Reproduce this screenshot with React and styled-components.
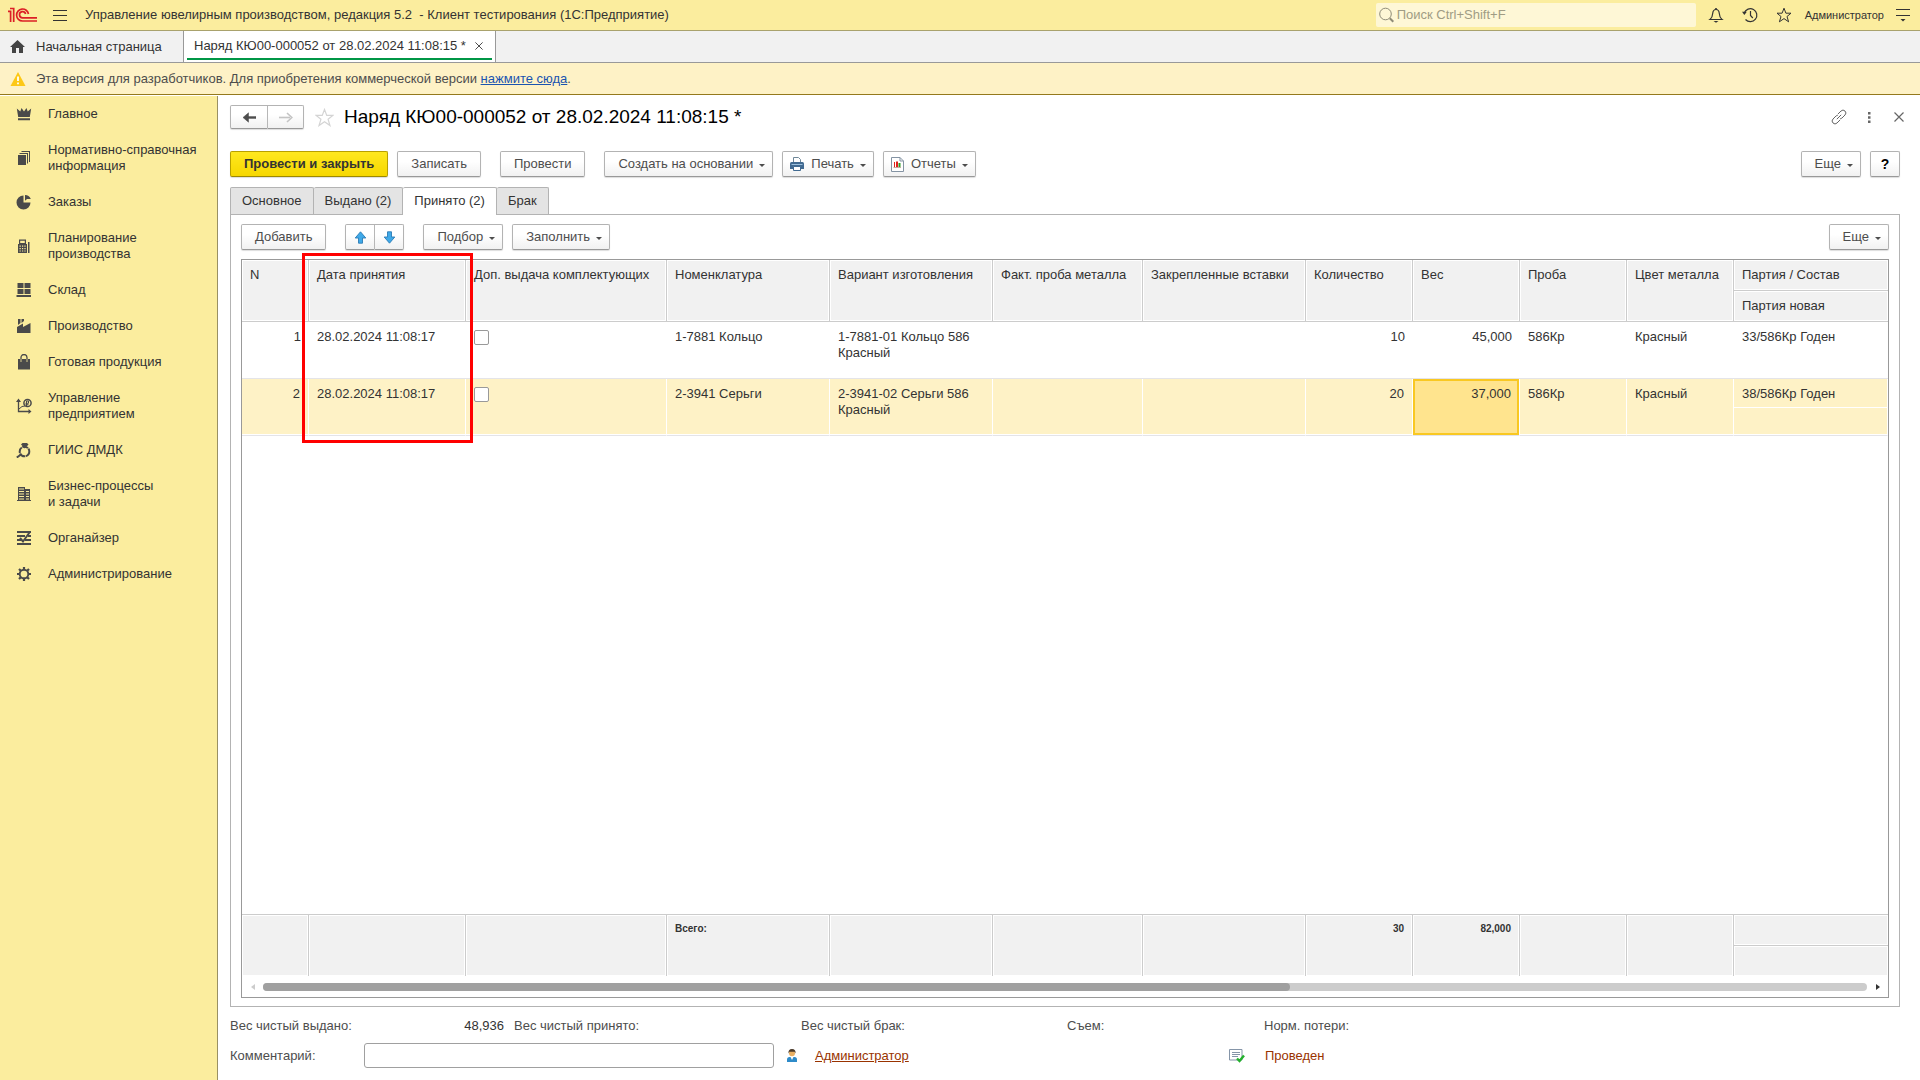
import React, { useState } from "react";
import styled, { createGlobalStyle, css } from "styled-components";

const GlobalStyle = createGlobalStyle`
  * {
    box-sizing: border-box;
  }

  body {
    margin: 0;
    background: #fff;
    color: #333;
    font-family: "Liberation Sans", Arial, sans-serif;
    font-size: 13px;
    line-height: 16px;
  }

  button,
  input {
    font: inherit;
    color: inherit;
  }

  svg {
    display: block;
    flex: none;
  }
`;

const Page = styled.div`
  display: flex;
  flex-direction: column;
  min-height: 100vh;
`;

/* ---------- top bar ---------- */

const TopBar = styled.header`
  display: flex;
  align-items: center;
  height: 31px;
  padding: 0 2px 0 8px;
  background: #fbed9e;
  border-bottom: 1px solid #a9a26d;
  white-space: nowrap;
  overflow: hidden;
`;

const PlainButton = styled.button`
  display: flex;
  align-items: center;
  justify-content: center;
  width: ${(p) => p.$width || 30}px;
  height: 24px;
  padding: 0;
  border: 0;
  background: none;
  flex: none;
`;

const AppTitle = styled.div`
  flex: 1;
  margin-left: 3px;
  white-space: pre;
`;

const Search = styled.label`
  display: flex;
  align-items: center;
  gap: 3px;
  width: 320px;
  height: 24px;
  margin-right: 3px;
  padding-left: 3px;
  border-radius: 2px;
  background: #fef7d6;
  color: #8f8c78;
`;

const SearchInput = styled.input`
  flex: 1;
  min-width: 0;
  padding: 0;
  border: 0;
  outline: 0;
  background: none;

  &::placeholder {
    color: #a09c84;
    opacity: 1;
  }
`;

const UserName = styled.button`
  padding: 0 4px;
  border: 0;
  background: none;
  font-size: 11px;
`;

/* ---------- window tabs ---------- */

const WindowTabs = styled.div`
  display: flex;
  height: 32px;
  background: #f1f1f1;
  border-bottom: 1px solid #999;
`;

const HomeTab = styled.button`
  display: flex;
  align-items: center;
  gap: 11px;
  width: 183px;
  padding: 0 0 0 10px;
  border: 0;
  background: none;
`;

const WindowTab = styled.div`
  padding: 0 3px 2px;
  border: solid #999;
  border-width: 0 1px;
  background: #fff;
`;

const WindowTabBody = styled.div`
  display: flex;
  align-items: center;
  height: 100%;
  padding: 2px 0 0 7px;
  border-bottom: 2px solid #009646;
`;

const Warning = styled.div`
  display: flex;
  align-items: center;
  gap: 10px;
  height: 32px;
  padding: 0 10px;
  background: #fef2c6;
  border-bottom: 1px solid #94791c;
  color: #4d4d4d;

  a {
    color: #1a54b0;
  }
`;

/* ---------- sections panel ---------- */

const Body = styled.div`
  display: flex;
  flex: 1;
`;

const Sections = styled.nav`
  width: 218px;
  flex: none;
  margin-top: 1px;
  background: #fbed9e;
  border-right: 1px solid #999063;
`;

const SectionLink = styled.a`
  display: flex;
  align-items: center;
  gap: 16px;
  padding: 10px 8px 10px 16px;
  color: #333;
  text-decoration: none;
  white-space: pre-line;

  svg {
    fill: #4a4a4a;
  }
`;

/* ---------- form ---------- */

const Form = styled.main`
  display: flex;
  flex-direction: column;
  flex: 1;
  min-width: 0;
  padding: 10px 20px 12px 12px;
`;

const TitleRow = styled.div`
  display: flex;
  align-items: center;
  height: 24px;
  margin: 0 -14px 22px 0;
`;

const Title = styled.h1`
  flex: 1;
  margin: 0;
  color: #000;
  font-size: 19px;
  font-weight: 400;
  line-height: 22px;
`;

const buttonFace = css`
  border: 1px solid #b3b3b3;
  border-bottom-color: #999;
  background: linear-gradient(#fff 40%, #f1f1f1);
  box-shadow: 0 1px 1px #ddd;
  color: #4d4d4d;
`;

const Button = styled.button`
  ${buttonFace}
  display: flex;
  align-items: center;
  justify-content: center;
  height: 26px;
  padding: 0 ${(p) => (p.$menu ? 7 : 13)}px 0 ${(p) => (p.$icon ? 7 : 13)}px;
  border-radius: 2px;
  white-space: nowrap;

  ${(p) =>
    p.$primary &&
    css`
      border-color: #b8a000;
      border-bottom-color: #9d8900;
      background: linear-gradient(#ffe81f, #f6d700);
      color: #333;
      font-weight: 700;
    `}

  svg:first-child {
    margin-right: 7px;
  }
`;

const HelpButton = styled(Button)`
  width: 30px;
  padding: 0;
  color: #000;
  font-size: 14px;
  font-weight: 700;
`;

const Caret = styled.span`
  margin: 3px 0 0 6px;
  border: 3px solid transparent;
  border-top-color: #4d4d4d;
  border-bottom: 0;
`;

const ButtonPair = styled.div`
  display: flex;
`;

const PairButton = styled.button`
  ${buttonFace}
  display: flex;
  align-items: center;
  justify-content: center;
  width: ${(p) => p.$width}px;
  height: ${(p) => p.$height}px;
  padding: 0;
  border-radius: 2px 0 0 2px;

  & + & {
    border-left: 0;
    border-radius: 0 2px 2px 0;
  }
`;

const Toolbar = styled.div`
  display: flex;
  align-items: center;
  gap: 19px;
`;

const ToolGroup = styled.div`
  display: flex;
  gap: 9px;
  margin-left: ${(p) => (p.$end ? "auto" : "0")};
`;

const PageTabs = styled.div`
  display: flex;
  height: 27px;
  margin-top: 10px;
`;

const PageTab = styled.button`
  position: relative;
  height: ${(p) => (p.$active ? 28 : 27)}px;
  padding: 0 11px 1px;
  border: 1px solid #b3b3b3;
  border-bottom-width: 0;
  border-radius: 2px 2px 0 0;
  background: ${(p) => (p.$active ? "#fff" : "#e4e4e4")};

  & + & {
    border-left-width: ${(p) => (p.$active ? "0" : "1px")};
  }
`;

const TabPanel = styled.div`
  display: flex;
  flex-direction: column;
  flex: 1;
  gap: 9px;
  padding: 9px 10px 8px;
  border: 1px solid #b3b3b3;
`;

/* ---------- grid ---------- */

const Grid = styled.div`
  position: relative;
  display: flex;
  flex-direction: column;
  flex: 1;
  border: 1px solid #999;
`;

const Table = styled.table`
  flex: 1;
  width: 100%;
  table-layout: fixed;
  border-collapse: separate;
  border-spacing: 0;
`;

const Head = styled.th`
  height: 31px;
  padding: 7px 0 0 8px;
  border: solid #ccc;
  border-width: 0 ${(p) => (p.$last ? 0 : 1)}px 1px 0;
  background: #f1f1f1;
  box-shadow: inset 0 0 0 1px #fff;
  font-weight: 400;
  text-align: left;
  vertical-align: top;
  white-space: nowrap;
`;

const Cell = styled.td`
  height: ${(p) => (p.$half ? 28 : 57)}px;
  padding: 7px 8px 0;
  border-bottom: 1px solid #e4e4e8;
  text-align: ${(p) => (p.$right ? "right" : "left")};
  vertical-align: top;

  ${(p) =>
    p.$selected &&
    css`
      border-right: 1px solid #fff;
      background: #fef2c6;
      box-shadow: inset 0 -1px 0 #fff;
    `}

  ${(p) =>
    p.$current &&
    css`
      background: #ffe48e;
      box-shadow: inset 0 0 0 2px #f9c822;
    `}
`;

const TopHalf = styled(Cell)`
  height: 29px;
  border-bottom-color: #fff;
  box-shadow: none;
`;

const Filler = styled.tr`
  height: 100%;
`;

const Total = styled.td`
  height: ${(p) => p.$height}px;
  padding: 6px 8px 0;
  border: solid #ccc;
  border-width: ${(p) => (p.$lower ? 0 : 1)}px ${(p) => (p.$last ? 0 : 1)}px
    ${(p) => (p.$upper ? 1 : 0)}px 0;
  background: #f1f1f1;
  box-shadow: inset 0 0 0 1px #fff;
  font-size: 10px;
  font-weight: 700;
  text-align: ${(p) => (p.$right ? "right" : "left")};
  vertical-align: top;
`;

const Checkbox = styled.input`
  display: block;
  appearance: none;
  width: 15px;
  height: 15px;
  margin: 1px 0 0;
  border: 1px solid #999;
  border-radius: 2px;
  background: #fff;
`;

const ScrollBar = styled.div`
  display: flex;
  align-items: center;
  justify-content: space-between;
  height: 21px;
  padding: 0 8px 0 9px;
`;

const Track = styled.div`
  flex: 1;
  height: 8px;
  margin: 0 9px 0 8px;
  border-radius: 4px;
  background: #ccc;
`;

const Thumb = styled.div`
  width: 64%;
  height: 8px;
  border-radius: 4px;
  background: #a0a0a0;
`;

const ScrollArrow = styled.span`
  border: 3px solid transparent;
  ${(p) =>
    p.$left
      ? "border-right: 4px solid #ccc; border-left: 0;"
      : "border-left: 4px solid #333; border-right: 0;"}
`;

const Highlight = styled.div`
  position: absolute;
  top: -7px;
  left: 60px;
  width: 171px;
  height: 190px;
  border: 3px solid #f00;
  pointer-events: none;
`;

/* ---------- form footer ---------- */

const Summary = styled.div`
  display: grid;
  grid-template-columns: 134px 140px 287px 266px 197px 1fr;
  align-items: center;
  margin-top: 11px;
  color: #4d4d4d;
`;

const SummaryValue = styled.output`
  justify-self: end;
  color: #333;
`;

const SummaryLabel = styled.span`
  padding-left: ${(p) => (p.$indent ? 10 : 0)}px;
`;

const CommentRow = styled.div`
  display: grid;
  grid-template-columns: 134px 410px 41px 414px 36px 1fr;
  align-items: center;
  margin-top: 9px;
  color: #4d4d4d;
`;

const CommentInput = styled.input`
  width: 100%;
  height: 25px;
  padding: 0 6px;
  border: 1px solid #a0a0a0;
  border-radius: 3px;
`;

const IconSlot = styled.span`
  padding-left: ${(p) => p.$pad || 0}px;
`;

const Author = styled.a`
  color: #993300;
`;

const Status = styled.span`
  color: #993300;
`;

/* ---------- icons ---------- */

const Logo = () => (
  <svg width="30" height="16" viewBox="0 0 30 16" fill="none" stroke="#dc1f26">
    <path d="M0 4.300H2.600V15M2 1.500H5.700V15" strokeWidth="1.700" />
    <path d="M20.500 7A6 6 0 1 0 14.500 14H29" strokeWidth="1.700" />
    <path d="M17.600 7A3.100 3.100 0 1 0 14.500 10.800H29" strokeWidth="1.700" />
  </svg>
);

const MenuIcon = () => (
  <svg width="14" height="11" viewBox="0 0 14 11" stroke="#333">
    <path d="M0 .5H14M0 5.5H14M0 10.5H14" />
  </svg>
);

const SearchIcon = () => (
  <svg width="15" height="16" viewBox="0 0 15 16" fill="none" stroke="#8f8c78">
    <circle cx="6.5" cy="7" r="5.8" />
    <path d="M10.8 11.2L14.3 14.8" strokeWidth="2" />
  </svg>
);

const BellIcon = () => (
  <svg width="16" height="16" viewBox="0 0 16 16" fill="none" stroke="#333">
    <path d="M2 12.5C4 11 4.5 9.500 4.700 6.500C4.900 4 6 2.500 8 2.500S11.100 4 11.300 6.500C11.500 9.500 12 11 14 12.500Z" strokeWidth="1.200" />
    <path d="M8 1V2.500" strokeWidth="1.600" />
    <path d="M5.500 14H10.500L8 15.800Z" fill="#333" stroke="none" />
  </svg>
);

const HistoryIcon = () => (
  <svg width="16" height="16" viewBox="0 0 16 16" fill="none" stroke="#333">
    <path d="M2.200 6A6.500 6.500 0 1 1 3.500 12.500" strokeWidth="1.200" />
    <path d="M8.500 4V8.500L10.800 11" strokeWidth="1.200" />
    <path d="M0 4.800H4.800L2.400 8Z" fill="#333" stroke="none" />
  </svg>
);

const StarIcon = ({ color = "#333", size = 16 }) => (
  <svg width={size} height={size} viewBox="0 0 16 16" fill="none" stroke={color}>
    <path d="M8 1.200L9.900 6.200H15L11 9.500L12.600 14.800L8 11.600L3.400 14.800L5 9.500L1 6.200H6.100Z" />
  </svg>
);

const OptionsIcon = () => (
  <svg width="14" height="14" viewBox="0 0 14 14">
    <path d="M0 1.500H14M0 7.500H14" stroke="#333" />
    <path d="M4.500 11H9.500L7 13.600Z" fill="#333" />
  </svg>
);

const HomeIcon = () => (
  <svg width="15" height="13" viewBox="0 0 15 13" fill="#444">
    <path d="M7.500 0L15 7H13V13H9V8H6V13H2V7H0Z" />
  </svg>
);

const CloseIcon = ({ size = 8, color = "#444" }) => (
  <svg width={size} height={size} viewBox="0 0 10 10" stroke={color} strokeWidth="1.200">
    <path d="M.5 .5L9.500 9.500M9.500 .5L.5 9.500" />
  </svg>
);

const WarningIcon = () => (
  <svg width="16" height="14" viewBox="0 0 16 14">
    <path d="M8 0L15.500 14H.5Z" fill="#fdc816" />
    <path d="M8 4.500V9M8 10.500V12.300" stroke="#fff" strokeWidth="1.800" />
  </svg>
);

const ArrowIcon = ({ back }) => (
  <svg width="15" height="11" viewBox="0 0 15 11" stroke={back ? "#4d4d4d" : "#c4c4c4"} fill={back ? "#4d4d4d" : "#c4c4c4"}>
    {back ? (
      <>
        <path d="M4 5.500H14" strokeWidth="2.400" />
        <path d="M6.500 .8V10.200L1 5.500Z" strokeWidth=".5" />
      </>
    ) : (
      <>
        <path d="M1 5.500H12" strokeWidth="1.600" />
        <path d="M9 1L13.800 5.500L9 10" strokeWidth="1.600" fill="none" />
      </>
    )}
  </svg>
);

const LinkIcon = () => (
  <svg width="16" height="16" viewBox="0 0 16 16" fill="none" stroke="#666">
    <path d="M6.800 5.200L10 2A2.800 2.800 0 0 1 14 6L10.800 9.200L9.300 9.600" />
    <path d="M9.200 10.800L6 14A2.800 2.800 0 0 1 2 10L5.200 6.800L6.700 6.400" />
    <path d="M5.800 10.200L10.200 5.800" />
  </svg>
);

const DotsIcon = () => (
  <svg width="3" height="11" viewBox="0 0 3 11" fill="#666">
    <path d="M0 0H2.500V2.500H0ZM0 4.200H2.500V6.700H0ZM0 8.500H2.500V11H0Z" />
  </svg>
);

const MoveIcon = ({ down }) => (
  <svg width="13" height="13" viewBox="0 0 13 13" fill="#3fa9e8" stroke="#2b7cb5">
    <path
      d={
        down
          ? "M4.500 .8H8.500V6H11.800L6.500 12.200L1.200 6H4.500Z"
          : "M6.500 .8L11.800 7H8.500V12.200H4.500V7H1.200Z"
      }
      strokeWidth=".9"
    />
  </svg>
);

const PrintIcon = () => (
  <svg width="14" height="14" viewBox="0 0 14 14">
    <path d="M3.500 5V.5H8.500L10.500 2.500V5" fill="#fff" stroke="#6f8798" />
    <path d="M0 6.500Q0 5 1.500 5H12.500Q14 5 14 6.500V12H0Z" fill="#416a91" />
    <path d="M1.500 7.500H12.500" stroke="#9cc0de" />
    <path d="M3.500 9.500H10.500V13.500H3.500Z" fill="#fff" stroke="#416a91" />
  </svg>
);

const ReportIcon = () => (
  <svg width="13" height="15" viewBox="0 0 13 15">
    <path d="M.5 .5H9L12.500 4V14.500H.5Z" fill="#fff" stroke="#8493a3" />
    <path d="M9 .5V4H12.500" fill="none" stroke="#8493a3" />
    <path d="M3 5H4V10H3ZM5 4.500H7V10H5Z" fill="#e0221c" />
    <path d="M7.500 6H9.500V10H7.500Z" fill="#2f9d27" />
    <path d="M2.500 10.500H10" stroke="#c9a79f" />
  </svg>
);

const UserIcon = () => (
  <svg width="10" height="13" viewBox="0 0 10 13">
    <path d="M0 13V10.500Q0 8 2.500 8H7.500Q10 8 10 10.500V13Z" fill="#2e8bc9" />
    <path d="M3.500 8L5 11L6.500 8Z" fill="#fff" />
    <circle cx="5" cy="4.200" r="3" fill="#e9b064" />
    <path d="M1.500 4.500Q1 0 5 0T8.500 4.500L7.500 2.800H2.500Z" fill="#4b3a2a" />
  </svg>
);

const PostedIcon = () => (
  <svg width="16" height="14" viewBox="0 0 16 14">
    <path d="M.5 .5H13V11H.5Z" fill="#fff" stroke="#8595a8" />
    <path d="M3 3.500H11M3 5.500H11M3 7.500H9" stroke="#8595a8" />
    <path d="M8 9.500L10.500 12L15 6.500" fill="none" stroke="#23b02c" strokeWidth="2.400" />
  </svg>
);

const sectionIcons = {
  crown: <path d="M.8 2.500L4.300 5.500L5.500 2L8 5.500L10.500 2L11.700 5.500L15.200 2.500L13.800 11H2.200ZM2 12.200H14V14.200H2Z" />,
  books: <path d="M2 5H10V15H2ZM3.500 3H12V13.500H11V4H3.500ZM5.500 1H14V12H13V2H5.500Z" />,
  pie: <path d="M7.500 1.500V8.500H14.500A7 7 0 1 1 7.500 1.500ZM9 1A6.500 6.500 0 0 1 14.800 5H11L9 6.800Z" />,
  register: (
    <path
      fillRule="evenodd"
      d="M3 1.500H10V6H11V15H2V6H3ZM4.200 2.700V5H8.800V2.700ZM3.500 7.500V8.800H4.800V7.500ZM6 7.500V8.800H7.200V7.500ZM8.400 7.500V8.800H9.600V7.500ZM3.500 10V11.200H4.800V10ZM6 10V11.200H7.200V10ZM8.400 10V11.200H9.600V10ZM3.500 12.400V13.600H4.800V12.400ZM6 12.400V13.600H7.200V12.400ZM8.400 12.400V13.600H9.600V12.400ZM12 4H13.500V15H12Z"
    />
  ),
  store: <path d="M1.500 1H7.500V6H1.500ZM8.500 1H14.500V6H8.500ZM1.500 7H7.500V12H1.500ZM8.500 7H14.500V12H8.500ZM.5 13H15V15H.5Z" />,
  factory: <path d="M2 1H4.500V5L2 7ZM5.500 1H8V3L5.500 5ZM1 9L7 5.500V9L14.500 5V15H1Z" />,
  bag: (
    <>
      <path d="M2 5H14V15.500H2Z" />
      <path d="M5 7V3.500A3 3 0 0 1 11 3.500V7" fill="none" stroke="#4a4a4a" strokeWidth="1.300" />
      <path d="M5 5V8M11 5V8" stroke="#fbed9e" strokeWidth=".8" />
    </>
  ),
  chart: (
    <>
      <path d="M2.500 2V13.500H14" fill="none" stroke="#4a4a4a" strokeWidth="1.300" />
      <path d="M0 4L2.500 .5L5 4ZM12.500 11L15.500 13.500L12.500 16Z" />
      <path d="M3 11L6 8.500L9 8" fill="none" stroke="#4a4a4a" />
      <circle cx="11.500" cy="5" r="3.600" fill="none" stroke="#4a4a4a" strokeWidth="1.500" />
      <path d="M10.500 8V3H12.500V5.300H9.500M9.500 6.700H12.500" fill="none" stroke="#4a4a4a" />
    </>
  ),
  ring: (
    <>
      <circle cx="8.500" cy="9.500" r="4.800" fill="none" stroke="#4a4a4a" strokeWidth="2" strokeDasharray="6 .6" />
      <path d="M5 2.500L6.500 1H11L12.500 2.500L8.800 6.500Z" />
      <path d="M.8 15.500L5 12.500" stroke="#4a4a4a" strokeWidth="2" />
    </>
  ),
  building: (
    <path
      fillRule="evenodd"
      d="M2 1H9V3H14V14H15V15H1V14H2ZM3 2.500V3.500H8V2.500ZM3 5V6H8V5ZM3 7.500V8.500H8V7.500ZM3 10V11H8V10ZM3 12.500V13.500H8V12.500ZM10 5V6H13V5ZM10 7.500V8.500H13V7.500ZM10 10V11H13V10ZM10 12.500V13.500H13V12.500Z"
    />
  ),
  organizer: (
    <>
      <path d="M1 1H15V3H1ZM1 5H9V7H1ZM12 5H15V7H12ZM1 9H5V11H1ZM9 9H15V11H9ZM1 13H15V15H1Z" />
      <path d="M4 8L7 11.500L13.500 2.500" fill="none" stroke="#4a4a4a" strokeWidth="2" />
    </>
  ),
  gear: (
    <>
      <circle cx="8" cy="8" r="4.300" fill="none" stroke="#4a4a4a" strokeWidth="1.900" />
      <path
        d="M8 1V3.500M8 12.500V15M1 8H3.500M12.500 8H15M3 3L4.800 4.800M11.200 11.200L13 13M13 3L11.200 4.800M4.800 11.200L3 13"
        stroke="#4a4a4a"
        strokeWidth="2.200"
      />
    </>
  ),
};

/* ---------- data ---------- */

const sections = [
  { icon: "crown", label: "Главное" },
  { icon: "books", label: "Нормативно-справочная\nинформация" },
  { icon: "pie", label: "Заказы" },
  { icon: "register", label: "Планирование\nпроизводства" },
  { icon: "store", label: "Склад" },
  { icon: "factory", label: "Производство" },
  { icon: "bag", label: "Готовая продукция" },
  { icon: "chart", label: "Управление\nпредприятием" },
  { icon: "ring", label: "ГИИС ДМДК" },
  { icon: "building", label: "Бизнес-процессы\nи задачи" },
  { icon: "organizer", label: "Органайзер" },
  { icon: "gear", label: "Администрирование" },
];

const tabs = ["Основное", "Выдано (2)", "Принято (2)", "Брак"];

const columns = [
  { key: "n", title: "N", width: 67, right: true },
  { key: "date", title: "Дата принятия", width: 157 },
  { key: "extra", title: "Доп. выдача комплектующих", width: 201 },
  { key: "item", title: "Номенклатура", width: 163, total: "Всего:" },
  { key: "variant", title: "Вариант изготовления", width: 163 },
  { key: "probe", title: "Факт. проба металла", width: 150 },
  { key: "inserts", title: "Закрепленные вставки", width: 163 },
  { key: "qty", title: "Количество", width: 107, right: true, total: "30" },
  { key: "weight", title: "Вес", width: 107, right: true, total: "82,000" },
  { key: "fineness", title: "Проба", width: 107 },
  { key: "color", title: "Цвет металла", width: 107 },
];

const rows = [
  {
    n: 1,
    date: "28.02.2024 11:08:17",
    item: "1-7881 Кольцо",
    variant: "1-7881-01 Кольцо 586 Красный",
    qty: 10,
    weight: "45,000",
    fineness: "586Кр",
    color: "Красный",
    batch: "33/586Кр Годен",
  },
  {
    n: 2,
    date: "28.02.2024 11:08:17",
    item: "2-3941 Серьги",
    variant: "2-3941-02 Серьги 586 Красный",
    qty: 20,
    weight: "37,000",
    fineness: "586Кр",
    color: "Красный",
    batch: "38/586Кр Годен",
  },
];

const MenuButton = ({ icon, children }) => (
  <Button type="button" $menu $icon={!!icon}>
    {icon}
    {children}
    <Caret />
  </Button>
);

const ItemsGrid = () => {
  const [selected, setSelected] = useState(2);

  return (
    <Grid>
      <Table>
        <colgroup>
          {columns.map((c) => (
            <col key={c.key} width={c.width} />
          ))}
          <col />
        </colgroup>
        <thead>
          <tr>
            {columns.map((c) => (
              <Head key={c.key} rowSpan={2}>
                {c.title}
              </Head>
            ))}
            <Head $last>Партия / Состав</Head>
          </tr>
          <tr>
            <Head $last>Партия новая</Head>
          </tr>
        </thead>
        <tbody>
          {rows.map((row) => {
            const active = row.n === selected;
            return (
              <React.Fragment key={row.n}>
                <tr onClick={() => setSelected(row.n)}>
                  {columns.map((c) => (
                    <Cell
                      key={c.key}
                      rowSpan={2}
                      $right={c.right}
                      $selected={active}
                      $current={active && c.key === "weight"}
                    >
                      {c.key === "extra" ? (
                        <Checkbox type="checkbox" aria-label={c.title} />
                      ) : (
                        row[c.key]
                      )}
                    </Cell>
                  ))}
                  <TopHalf $selected={active}>{row.batch}</TopHalf>
                </tr>
                <tr>
                  <Cell $half $selected={active} />
                </tr>
              </React.Fragment>
            );
          })}
          <Filler>
            <td colSpan={12} />
          </Filler>
        </tbody>
        <tfoot>
          <tr>
            {columns.map((c) => (
              <Total key={c.key} rowSpan={2} $height={62} $right={c.right}>
                {c.total}
              </Total>
            ))}
            <Total $height={32} $last $upper />
          </tr>
          <tr>
            <Total $height={30} $last $lower />
          </tr>
        </tfoot>
      </Table>
      <ScrollBar>
        <ScrollArrow $left />
        <Track>
          <Thumb />
        </Track>
        <ScrollArrow />
      </ScrollBar>
      <Highlight />
    </Grid>
  );
};

const App = () => {
  const [tab, setTab] = useState(2);

  return (
    <Page>
      <GlobalStyle />
      <TopBar>
        <Logo />
        <PlainButton type="button" aria-label="Меню" $width={44}>
          <MenuIcon />
        </PlainButton>
        <AppTitle>
          {"Управление ювелирным производством, редакция 5.2  - Клиент тестирования (1С:Предприятие)"}
        </AppTitle>
        <Search>
          <SearchIcon />
          <SearchInput type="text" placeholder="Поиск Ctrl+Shift+F" aria-label="Поиск" />
        </Search>
        <PlainButton type="button" aria-label="Уведомления" $width={34}>
          <BellIcon />
        </PlainButton>
        <PlainButton type="button" aria-label="История" $width={34}>
          <HistoryIcon />
        </PlainButton>
        <PlainButton type="button" aria-label="Избранное" $width={34}>
          <StarIcon />
        </PlainButton>
        <UserName type="button">Администратор</UserName>
        <PlainButton type="button" aria-label="Настройки" $width={30}>
          <OptionsIcon />
        </PlainButton>
      </TopBar>

      <WindowTabs>
        <HomeTab type="button">
          <HomeIcon />
          Начальная страница
        </HomeTab>
        <WindowTab>
          <WindowTabBody>
            Наряд КЮ00-000052 от 28.02.2024 11:08:15 *
            <PlainButton type="button" aria-label="Закрыть" $width={26}>
              <CloseIcon />
            </PlainButton>
          </WindowTabBody>
        </WindowTab>
      </WindowTabs>

      <Warning>
        <WarningIcon />
        <span>
          Эта версия для разработчиков. Для приобретения коммерческой версии{" "}
          <a href="#buy">нажмите сюда</a>.
        </span>
      </Warning>

      <Body>
        <Sections>
          {sections.map((s) => (
            <SectionLink key={s.icon} href={`#${s.icon}`}>
              <svg width="16" height="16" viewBox="0 0 16 16">
                {sectionIcons[s.icon]}
              </svg>
              {s.label}
            </SectionLink>
          ))}
        </Sections>

        <Form>
          <TitleRow>
            <ButtonPair>
              <PairButton type="button" aria-label="Назад" $width={38} $height={24}>
                <ArrowIcon back />
              </PairButton>
              <PairButton type="button" aria-label="Вперед" $width={36} $height={24}>
                <ArrowIcon />
              </PairButton>
            </ButtonPair>
            <PlainButton type="button" aria-label="В избранное" $width={40}>
              <StarIcon color="#d4d4d4" size={19} />
            </PlainButton>
            <Title>Наряд КЮ00-000052 от 28.02.2024 11:08:15 *</Title>
            <PlainButton type="button" aria-label="Ссылка">
              <LinkIcon />
            </PlainButton>
            <PlainButton type="button" aria-label="Действия">
              <DotsIcon />
            </PlainButton>
            <PlainButton type="button" aria-label="Закрыть форму">
              <CloseIcon size={10} color="#666" />
            </PlainButton>
          </TitleRow>

          <Toolbar>
            <ToolGroup>
              <Button type="button" $primary>
                Провести и закрыть
              </Button>
              <Button type="button">Записать</Button>
            </ToolGroup>
            <Button type="button">Провести</Button>
            <ToolGroup>
              <MenuButton>Создать на основании</MenuButton>
              <MenuButton icon={<PrintIcon />}>Печать</MenuButton>
              <MenuButton icon={<ReportIcon />}>Отчеты</MenuButton>
            </ToolGroup>
            <ToolGroup $end>
              <MenuButton>Еще</MenuButton>
              <HelpButton type="button">?</HelpButton>
            </ToolGroup>
          </Toolbar>

          <PageTabs role="tablist">
            {tabs.map((label, i) => (
              <PageTab
                key={label}
                type="button"
                role="tab"
                aria-selected={tab === i}
                $active={tab === i}
                onClick={() => setTab(i)}
              >
                {label}
              </PageTab>
            ))}
          </PageTabs>

          <TabPanel>
            <Toolbar>
              <Button type="button">Добавить</Button>
              <ButtonPair>
                <PairButton type="button" aria-label="Вверх" $width={30} $height={26}>
                  <MoveIcon />
                </PairButton>
                <PairButton type="button" aria-label="Вниз" $width={29} $height={26}>
                  <MoveIcon down />
                </PairButton>
              </ButtonPair>
              <ToolGroup>
                <MenuButton>Подбор</MenuButton>
                <MenuButton>Заполнить</MenuButton>
              </ToolGroup>
              <ToolGroup $end>
                <MenuButton>Еще</MenuButton>
              </ToolGroup>
            </Toolbar>
            <ItemsGrid />
          </TabPanel>

          <Summary>
            <SummaryLabel>Вес чистый выдано:</SummaryLabel>
            <SummaryValue>48,936</SummaryValue>
            <SummaryLabel $indent>Вес чистый принято:</SummaryLabel>
            <SummaryLabel $indent>Вес чистый брак:</SummaryLabel>
            <SummaryLabel $indent>Съем:</SummaryLabel>
            <SummaryLabel $indent>Норм. потери:</SummaryLabel>
          </Summary>
          <CommentRow>
            <label htmlFor="comment">Комментарий:</label>
            <CommentInput id="comment" type="text" />
            <IconSlot $pad={13}>
              <UserIcon />
            </IconSlot>
            <Author href="#author">Администратор</Author>
            <IconSlot>
              <PostedIcon />
            </IconSlot>
            <Status>Проведен</Status>
          </CommentRow>
        </Form>
      </Body>
    </Page>
  );
};

export default App;
